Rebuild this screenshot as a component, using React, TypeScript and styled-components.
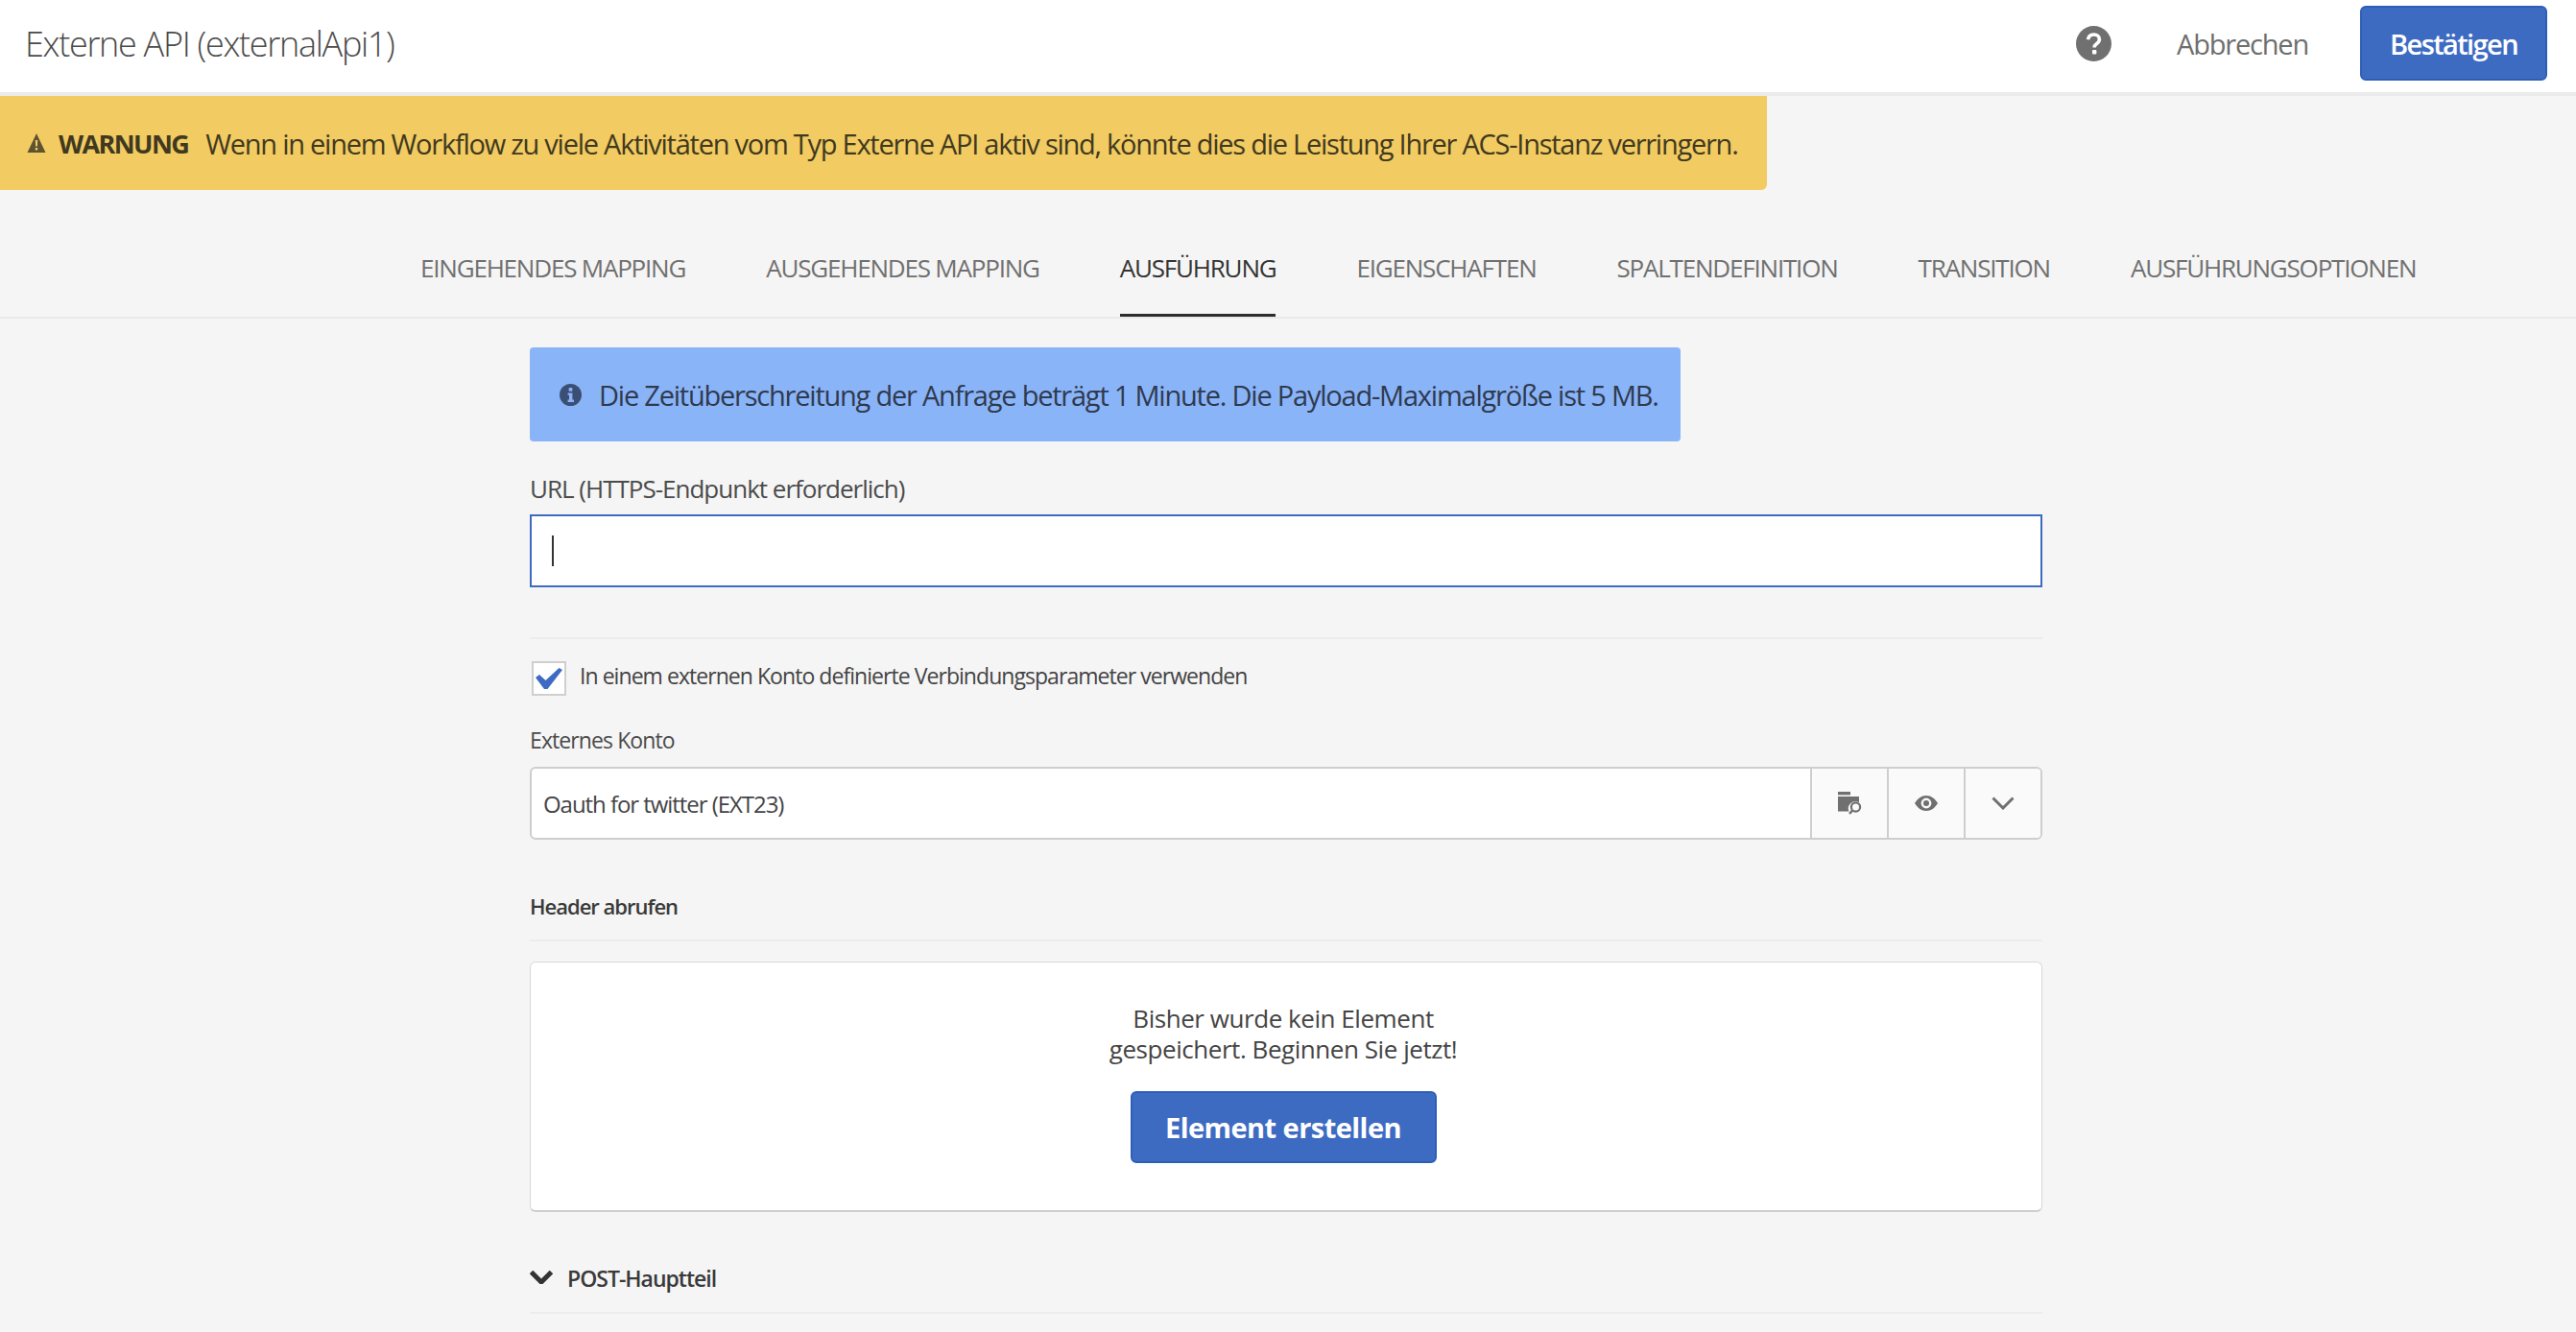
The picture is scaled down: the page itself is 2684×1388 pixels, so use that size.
import { FC } from "react";
import styled, { createGlobalStyle } from "styled-components";

const GlobalStyle = createGlobalStyle`
  html, body {
    margin: 0;
    padding: 0;
    height: 100%;
    background: #f5f5f5;
    overflow: hidden;
  }
  body {
    font-family: "Open Sans", "Noto Sans", sans-serif;
    color: #3a3a3a;
  }
  * { box-sizing: border-box; }
`;

const TABS = [
  "EINGEHENDES MAPPING",
  "AUSGEHENDES MAPPING",
  "AUSFÜHRUNG",
  "EIGENSCHAFTEN",
  "SPALTENDEFINITION",
  "TRANSITION",
  "AUSFÜHRUNGSOPTIONEN",
];

const ACTIVE_TAB = "AUSFÜHRUNG";

const WarningIcon: FC = () => (
  <svg width="20" height="20" viewBox="0 0 20 20">
    <path
      fillRule="evenodd"
      fill="#5f5230"
      d="M10 0 L19.5 20 L0.5 20 Z M8.8 7 L9.1 13.5 L10.9 13.5 L11.2 7 Z M8.8 15 L8.8 17.6 L11.2 17.6 L11.2 15 Z"
    />
  </svg>
);

const HelpIcon: FC = () => (
  <svg width="37" height="37" viewBox="0 0 37 37">
    <circle cx="18.5" cy="18.5" r="18.5" fill="#707070" />
    <path
      d="M12.6 14.2 C13 10.8 15.4 9 18.6 9 C22 9 24.4 11 24.4 14 C24.4 16.4 23 17.6 21.4 18.7 C19.9 19.7 19.2 20.5 19.2 22.4"
      fill="none"
      stroke="#fff"
      strokeWidth="3.6"
    />
    <rect x="17" y="25" width="4.4" height="4.4" rx="1" fill="#fff" />
  </svg>
);

const InfoIcon: FC = () => (
  <svg width="23" height="23" viewBox="0 0 23 23">
    <circle cx="11.5" cy="11.5" r="11.5" fill="#3b4f75" />
    <rect x="9.6" y="4" width="3.8" height="3.8" rx="1" fill="#8ab4f8" />
    <path d="M8.6 9.6 H13.4 V16.6 H15 V19 H8.6 V16.6 H10 V11.8 H8.6 Z" fill="#8ab4f8" />
  </svg>
);

const CheckIcon: FC = () => (
  <svg width="28" height="22" viewBox="0 0 28 22">
    <path d="M0 10 L4 7 L10.5 13 L24.5 0 L28 2 L12.5 22 L9 22 Z" fill="#3e6bc2" />
  </svg>
);

const FolderSearchIcon: FC = () => (
  <svg width="26" height="24" viewBox="0 0 26 24">
    <rect x="1" y="0" width="13" height="3.4" fill="#707070" />
    <path
      d="M1 5 H23 V11.2 A7.4 7.4 0 0 0 12.4 20.4 H1 Z"
      fill="#707070"
    />
    <circle cx="19.5" cy="16" r="4.6" fill="none" stroke="#707070" strokeWidth="2.2" />
    <path d="M16 19.6 L13 23" stroke="#707070" strokeWidth="2.4" fill="none" />
  </svg>
);

const EyeIcon: FC = () => (
  <svg width="24" height="16" viewBox="0 0 24 16">
    <path
      fillRule="evenodd"
      fill="#707070"
      d="M0 8 C3 3 7 0 12 0 C17 0 21 3 24 8 C21 13 17 16 12 16 C7 16 3 13 0 8 Z M12 2.6 A5.4 5.4 0 1 0 12 13.4 A5.4 5.4 0 1 0 12 2.6 Z"
    />
    <circle cx="12" cy="8" r="3" fill="#707070" />
  </svg>
);

const ChevronIcon: FC<{ size?: number; color?: string; weight?: number }> = ({
  size = 24,
  color = "#707070",
  weight = 3,
}) => (
  <svg width={size} height={size * 0.6} viewBox="0 0 24 14.4">
    <path
      d="M1.5 1.5 L12 12 L22.5 1.5"
      fill="none"
      stroke={color}
      strokeWidth={weight}
    />
  </svg>
);

const App: FC = () => {
  return (
    <Page>
      <GlobalStyle />
      <TopBar>
        <Title>Externe API (externalApi1)</Title>
        <TopActions>
          <HelpIcon />
          <CancelButton>Abbrechen</CancelButton>
          <PrimaryButton>Bestätigen</PrimaryButton>
        </TopActions>
      </TopBar>

      <WarningBanner>
        <WarningIcon />
        <WarningLabel>WARNUNG</WarningLabel>
        <span>
          Wenn in einem Workflow zu viele Aktivitäten vom Typ Externe API aktiv
          sind, könnte dies die Leistung Ihrer ACS-Instanz verringern.
        </span>
      </WarningBanner>

      <TabBar>
        {TABS.map((tab) => (
          <Tab key={tab} active={tab === ACTIVE_TAB}>
            {tab}
          </Tab>
        ))}
      </TabBar>

      <Form>
        <InfoBanner>
          <InfoIcon />
          <span>
            Die Zeitüberschreitung der Anfrage beträgt 1 Minute. Die
            Payload-Maximalgröße ist 5 MB.
          </span>
        </InfoBanner>

        <UrlLabel>URL (HTTPS-Endpunkt erforderlich)</UrlLabel>
        <UrlInput>
          <Caret />
        </UrlInput>

        <Divider />

        <CheckRow>
          <CheckBox>
            <CheckIcon />
          </CheckBox>
          <CheckLabel>
            In einem externen Konto definierte Verbindungsparameter verwenden
          </CheckLabel>
        </CheckRow>

        <AccountLabel>Externes Konto</AccountLabel>
        <SelectBox>
          <SelectValue>Oauth for twitter (EXT23)</SelectValue>
          <SelectButton>
            <FolderSearchIcon />
          </SelectButton>
          <SelectButton>
            <EyeIcon />
          </SelectButton>
          <SelectButton>
            <ChevronIcon />
          </SelectButton>
        </SelectBox>

        <SectionTitle>Header abrufen</SectionTitle>
        <EmptyCard>
          <EmptyText>
            Bisher wurde kein Element
            <br />
            gespeichert. Beginnen Sie jetzt!
          </EmptyText>
          <CreateButton>Element erstellen</CreateButton>
        </EmptyCard>

        <CollapseRow>
          <ChevronIcon size={24} color="#333" weight={5} />
          <CollapseTitle>POST-Hauptteil</CollapseTitle>
        </CollapseRow>
      </Form>
    </Page>
  );
};

const Page = styled.div`
  width: 2684px;
  height: 1388px;
  overflow: hidden;
  background: #f5f5f5;
`;

const TopBar = styled.header`
  height: 100px;
  display: flex;
  align-items: center;
  justify-content: space-between;
  padding: 0 30px 6px 26px;
  background: #fff;
  border-bottom: 4px solid #ebebeb;
`;

const Title = styled.h1`
  margin: 0;
  font-size: 36px;
  font-weight: 300;
  letter-spacing: -1.3px;
  color: #4b4b4b;
`;

const TopActions = styled.div`
  display: flex;
  align-items: center;
`;

const CancelButton = styled.span`
  margin-left: 68px;
  font-size: 29px;
  letter-spacing: -1.2px;
  color: #6e6e6e;
`;

const PrimaryButton = styled.button`
  margin-left: 54px;
  width: 195px;
  height: 78px;
  border: 2px solid #2d5fb8;
  border-radius: 6px;
  background: #3e6bc2;
  color: #fff;
  font-family: inherit;
  font-size: 29px;
  font-weight: 600;
  letter-spacing: -1.6px;
`;

const WarningBanner = styled.div`
  width: 1841px;
  height: 98px;
  display: flex;
  align-items: center;
  padding-left: 28px;
  background: #f2cb62;
  border-radius: 0 0 6px 0;
  font-size: 29px;
  letter-spacing: -1.25px;
  white-space: nowrap;
  color: #40391f;
`;

const WarningLabel = styled.strong`
  margin: 0 18px 0 13px;
  font-size: 27px;
  font-weight: 700;
  letter-spacing: -1.6px;
`;

const TabBar = styled.nav`
  height: 134px;
  display: flex;
  gap: 84px;
  padding-left: 438px;
  border-bottom: 2px solid #e9e9e9;
`;

const Tab = styled.div<{ active?: boolean }>`
  height: 132px;
  padding-top: 63px;
  font-size: 26px;
  letter-spacing: -1.2px;
  white-space: nowrap;
  color: ${(props) => (props.active ? "#333" : "#707070")};
  border-bottom: 3px solid ${(props) => (props.active ? "#2c2c2c" : "transparent")};
`;

const Form = styled.main`
  width: 1576px;
  margin-left: 552px;
  padding-top: 30px;
`;

const InfoBanner = styled.div`
  width: 1199px;
  height: 98px;
  display: flex;
  align-items: center;
  gap: 18px;
  padding-left: 31px;
  background: #8ab4f8;
  border-radius: 4px;
  font-size: 29px;
  letter-spacing: -1.22px;
  color: #2f3a4f;
`;

const UrlLabel = styled.div`
  margin-top: 31px;
  height: 45px;
  font-size: 26px;
  letter-spacing: -1px;
  color: #4b4b4b;
`;

const UrlInput = styled.div`
  height: 76px;
  display: flex;
  align-items: center;
  padding-left: 21px;
  background: #fff;
  border: 2px solid #3e6bc2;
`;

const Caret = styled.div`
  width: 2px;
  height: 32px;
  background: #333;
`;

const Divider = styled.div`
  margin-top: 52px;
  height: 2px;
  background: #ececec;
`;

const CheckRow = styled.div`
  margin-top: 22px;
  display: flex;
  align-items: center;
  gap: 14px;
  padding-left: 2px;
`;

const CheckBox = styled.div`
  width: 36px;
  height: 36px;
  display: flex;
  align-items: center;
  justify-content: center;
  background: #fff;
  border: 2px solid #cfcfcf;
`;

const CheckLabel = styled.span`
  margin-bottom: 6px;
  font-size: 23px;
  letter-spacing: -0.95px;
  color: #444;
`;

const AccountLabel = styled.div`
  margin-top: 29px;
  height: 44px;
  font-size: 23px;
  letter-spacing: -0.9px;
  color: #4b4b4b;
`;

const SelectBox = styled.div`
  height: 76px;
  display: flex;
  background: #fff;
  border: 2px solid #cecece;
  border-radius: 6px;
  overflow: hidden;
`;

const SelectValue = styled.div`
  flex: 1;
  display: flex;
  align-items: center;
  padding-left: 12px;
  font-size: 24px;
  letter-spacing: -1.05px;
  color: #444;
`;

const SelectButton = styled.div`
  width: 80px;
  display: flex;
  align-items: center;
  justify-content: center;
  background: #fafafa;
  border-left: 2px solid #cecece;
`;

const SectionTitle = styled.div`
  margin-top: 54px;
  height: 52px;
  border-bottom: 2px solid #ececec;
  font-size: 22px;
  font-weight: 600;
  letter-spacing: -1px;
  color: #3a3a3a;
`;

const EmptyCard = styled.section`
  margin-top: 21px;
  height: 261px;
  display: flex;
  flex-direction: column;
  align-items: center;
  padding: 42px 6px 0 0;
  background: #fff;
  border: 1px solid #d8d8d8;
  border-bottom: 2px solid #cecece;
  border-radius: 6px;
`;

const EmptyText = styled.div`
  font-size: 26px;
  line-height: 32px;
  letter-spacing: -0.45px;
  text-align: center;
  color: #444;
`;

const CreateButton = styled.button`
  margin-top: 28px;
  width: 319px;
  height: 75px;
  border: 2px solid #2d5fb8;
  border-radius: 6px;
  background: #3e6bc2;
  color: #fff;
  font-family: inherit;
  font-size: 29px;
  font-weight: 700;
  letter-spacing: -0.55px;
`;

const CollapseRow = styled.div`
  margin-top: 48px;
  height: 58px;
  display: flex;
  align-items: flex-start;
  gap: 15px;
  border-bottom: 2px solid #ececec;
  padding-top: 13px;
`;

const CollapseTitle = styled.span`
  margin-top: -8px;
  font-size: 23px;
  font-weight: 600;
  letter-spacing: -1px;
  color: #3a3a3a;
`;

export default App;
